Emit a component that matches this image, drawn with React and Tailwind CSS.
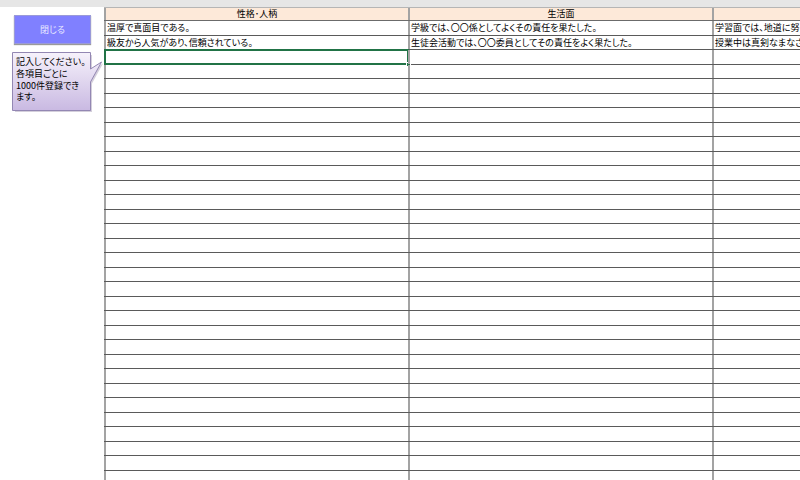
import React from "react";

const col1 = ["温厚で真面目である。", "級友から人気があり、信頼されている。"];
const col2 = ["学級では、〇〇係としてよくその責任を果たした。", "生徒会活動では、〇〇委員としてその責任をよく果たした。"];
const col3 = ["学習面では、地道に努", "授業中は真剣なまなざ"];

const ROWS = 32;

function Cell({ text, selected }) {
  return (
    <div className="relative w-[304px] shrink-0 h-full border-l-2 border-[#a3a3a3] pl-[1px] whitespace-nowrap leading-[14px]">
      <div className="overflow-hidden">{text}</div>
      {selected && (
        <>
          <div className="absolute left-[-2px] top-[-1px] right-[-1px] bottom-[-1px] border-2 border-[#217346]" />
          <div className="absolute right-[-3px] bottom-[-3px] w-[5px] h-[5px] bg-[#217346] border border-white" />
        </>
      )}
    </div>
  );
}

export default function App() {
  const rows = Array.from({ length: ROWS }, (_, i) => i);
  return (
    <div
      className="w-[800px] h-[480px] overflow-hidden bg-white flex flex-col text-black"
      style={{ fontFamily: '"Noto Sans CJK JP", "Noto Sans", sans-serif' }}
    >
      <div className="h-[7px] shrink-0 bg-[#e6e6e6]" />
      <div className="flex flex-1 min-h-0">
        <div className="w-[104px] shrink-0 flex flex-col pl-[12px]">
          <div className="ml-[2px] mt-[8px] w-[77px] h-[29px] bg-[#8080ff] border border-[#9a9ad8] shadow-[0_1px_1px_#9a9a9a] flex items-center justify-center text-[9px] text-[#e8e8ff] [font-feature-settings:'palt']">
            閉じる
          </div>
          <div className="relative mt-[8px] w-[78px] h-[59px]">
            <svg className="absolute left-0 top-0 overflow-visible" width="92" height="62" viewBox="0 0 92 62">
              <defs>
                <linearGradient id="cg" x1="0" y1="0" x2="0" y2="1">
                  <stop offset="0" stopColor="#f6f2fb" />
                  <stop offset="1" stopColor="#c9b9e2" />
                </linearGradient>
              </defs>
              <path
                d="M1.5 1.5 H78.5 V17 L89.5 10 L78.5 30 V58.5 H1.5 Z"
                fill="#a9a0b8"
                transform="translate(1.5,1.5)"
                opacity="0.5"
              />
              <path
                d="M0.5 0.5 H78.5 V17 L89.5 10 L78.5 30 V58.5 H0.5 Z"
                fill="url(#cg)"
                stroke="#9387b3"
                strokeWidth="1"
              />
            </svg>
            <div className="relative pl-[4px] pt-[4px] text-[9px] leading-[11.8px] text-black [font-feature-settings:'palt']">
              <div>記入してください。</div>
              <div>各項目ごとに</div>
              <div>1000件登録でき</div>
              <div>ます。</div>
            </div>
          </div>
        </div>
        <div className="flex-1 min-w-0 overflow-hidden flex flex-col text-[9px] [font-feature-settings:'palt']">
          <div className="flex h-[14px] shrink-0 bg-[#fde9d9] border-t border-[#b5b5b5] border-b border-b-[#6b6b6b]">
            <div className="w-[304px] shrink-0 border-l-2 border-[#a3a3a3] text-center leading-[12px]">性格･人柄</div>
            <div className="w-[304px] shrink-0 border-l-2 border-[#a3a3a3] text-center leading-[12px]">生活面</div>
            <div className="w-[304px] shrink-0 border-l-2 border-[#a3a3a3]" />
          </div>
          {rows.map((i) => (
            <div key={i} className="flex h-[14.5px] shrink-0 border-b border-[#5a5a5a]">
              <Cell text={col1[i] || ""} selected={i === 2} />
              <Cell text={col2[i] || ""} />
              <Cell text={col3[i] || ""} />
            </div>
          ))}
        </div>
      </div>
    </div>
  );
}
